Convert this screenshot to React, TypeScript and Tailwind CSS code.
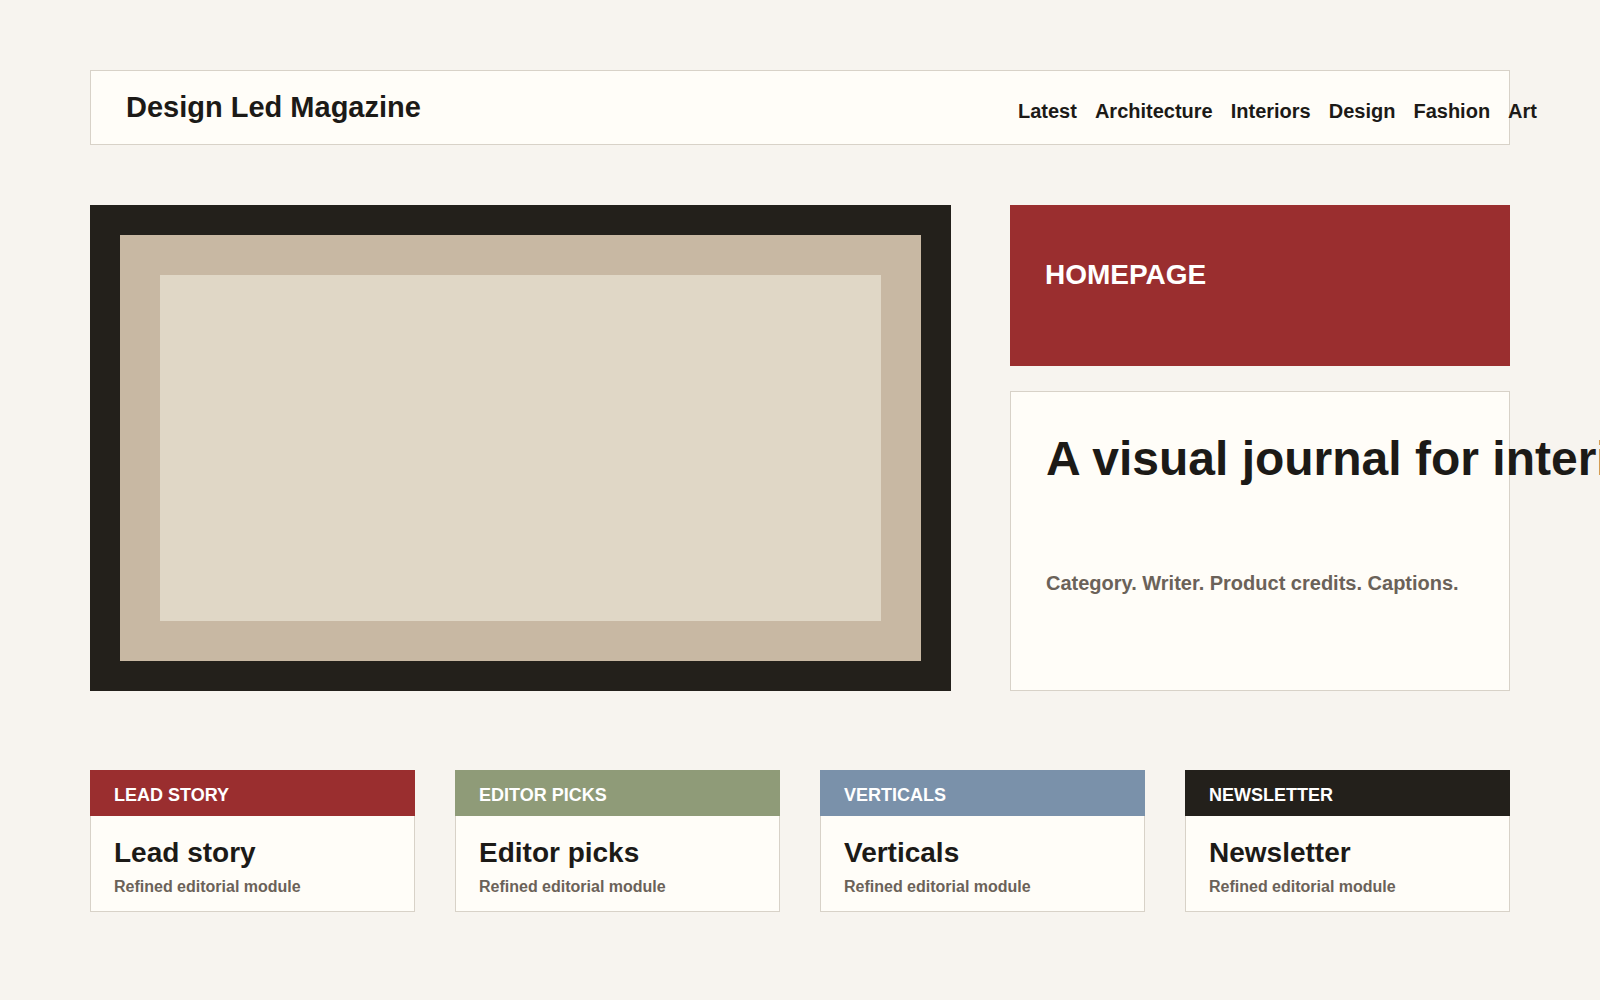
export default function App() {
  const cards = [
    { tag: "LEAD STORY", title: "Lead story", color: "bg-[#9a2e2f]" },
    { tag: "EDITOR PICKS", title: "Editor picks", color: "bg-[#8f9b78]" },
    { tag: "VERTICALS", title: "Verticals", color: "bg-[#7a91aa]" },
    { tag: "NEWSLETTER", title: "Newsletter", color: "bg-[#23201b]" },
  ];
  return (
    <div className="min-h-[1000px] bg-[#f7f4ef] pt-[70px] text-[#1c1a17]" style={{ fontFamily: '"Liberation Sans", Arial, sans-serif' }}>
      <div className="mx-auto w-[1420px]">
        <header className="flex h-[75px] items-center border border-[#d8d2c8] bg-[#fffdf8] pl-[35px]">
          <div className="text-[29px] font-bold leading-none">Design Led Magazine</div>
          <nav className="ml-auto flex translate-x-[28px] gap-[18px] pt-[6px] text-[20px] font-bold whitespace-nowrap">
            <span>Latest</span><span>Architecture</span><span>Interiors</span><span>Design</span><span>Fashion</span><span>Art</span>
          </nav>
        </header>
        <section className="mt-[60px] grid grid-cols-[861px_500px] gap-[59px]">
          <div className="h-[486px] bg-[#23201b] p-[30px]">
            <div className="h-full bg-[#c8b8a3] p-[40px]">
              <div className="h-full bg-[#e0d7c6]" />
            </div>
          </div>
          <div className="flex flex-col gap-[25px]">
            <div className="h-[161px] bg-[#9a2e2f] px-[35px] pt-[53px] text-[28px] font-bold leading-[34px] text-white">HOMEPAGE</div>
            <div className="h-[300px] border border-[#d8d2c8] bg-[#fffdf8] px-[35px] pt-[38px]">
              <h1 className="whitespace-nowrap text-[48px] font-bold leading-[58px]">A visual journal for interiors</h1>
              <p className="mt-[80px] text-[20px] font-bold text-[#6b6259]">Category. Writer. Product credits. Captions.</p>
            </div>
          </div>
        </section>
        <section className="mt-[79px] grid grid-cols-4 gap-[40px]">
          {cards.map((c) => (
            <div key={c.tag} className="border border-[#d8d2c8] bg-[#fffdf8]">
              <div className={`${c.color} -m-px mb-0 flex h-[46px] items-center px-[24px] pt-[4px] text-[18px] font-bold text-white`}>{c.tag}</div>
              <div className="px-[23px] pb-[12px] pt-[20px]">
                <div className="text-[28px] font-bold leading-[34px]">{c.title}</div>
                <div className="mt-[5px] text-[16px] font-bold text-[#6b6259]">Refined editorial module</div>
              </div>
            </div>
          ))}
        </section>
      </div>
    </div>
  );
}
